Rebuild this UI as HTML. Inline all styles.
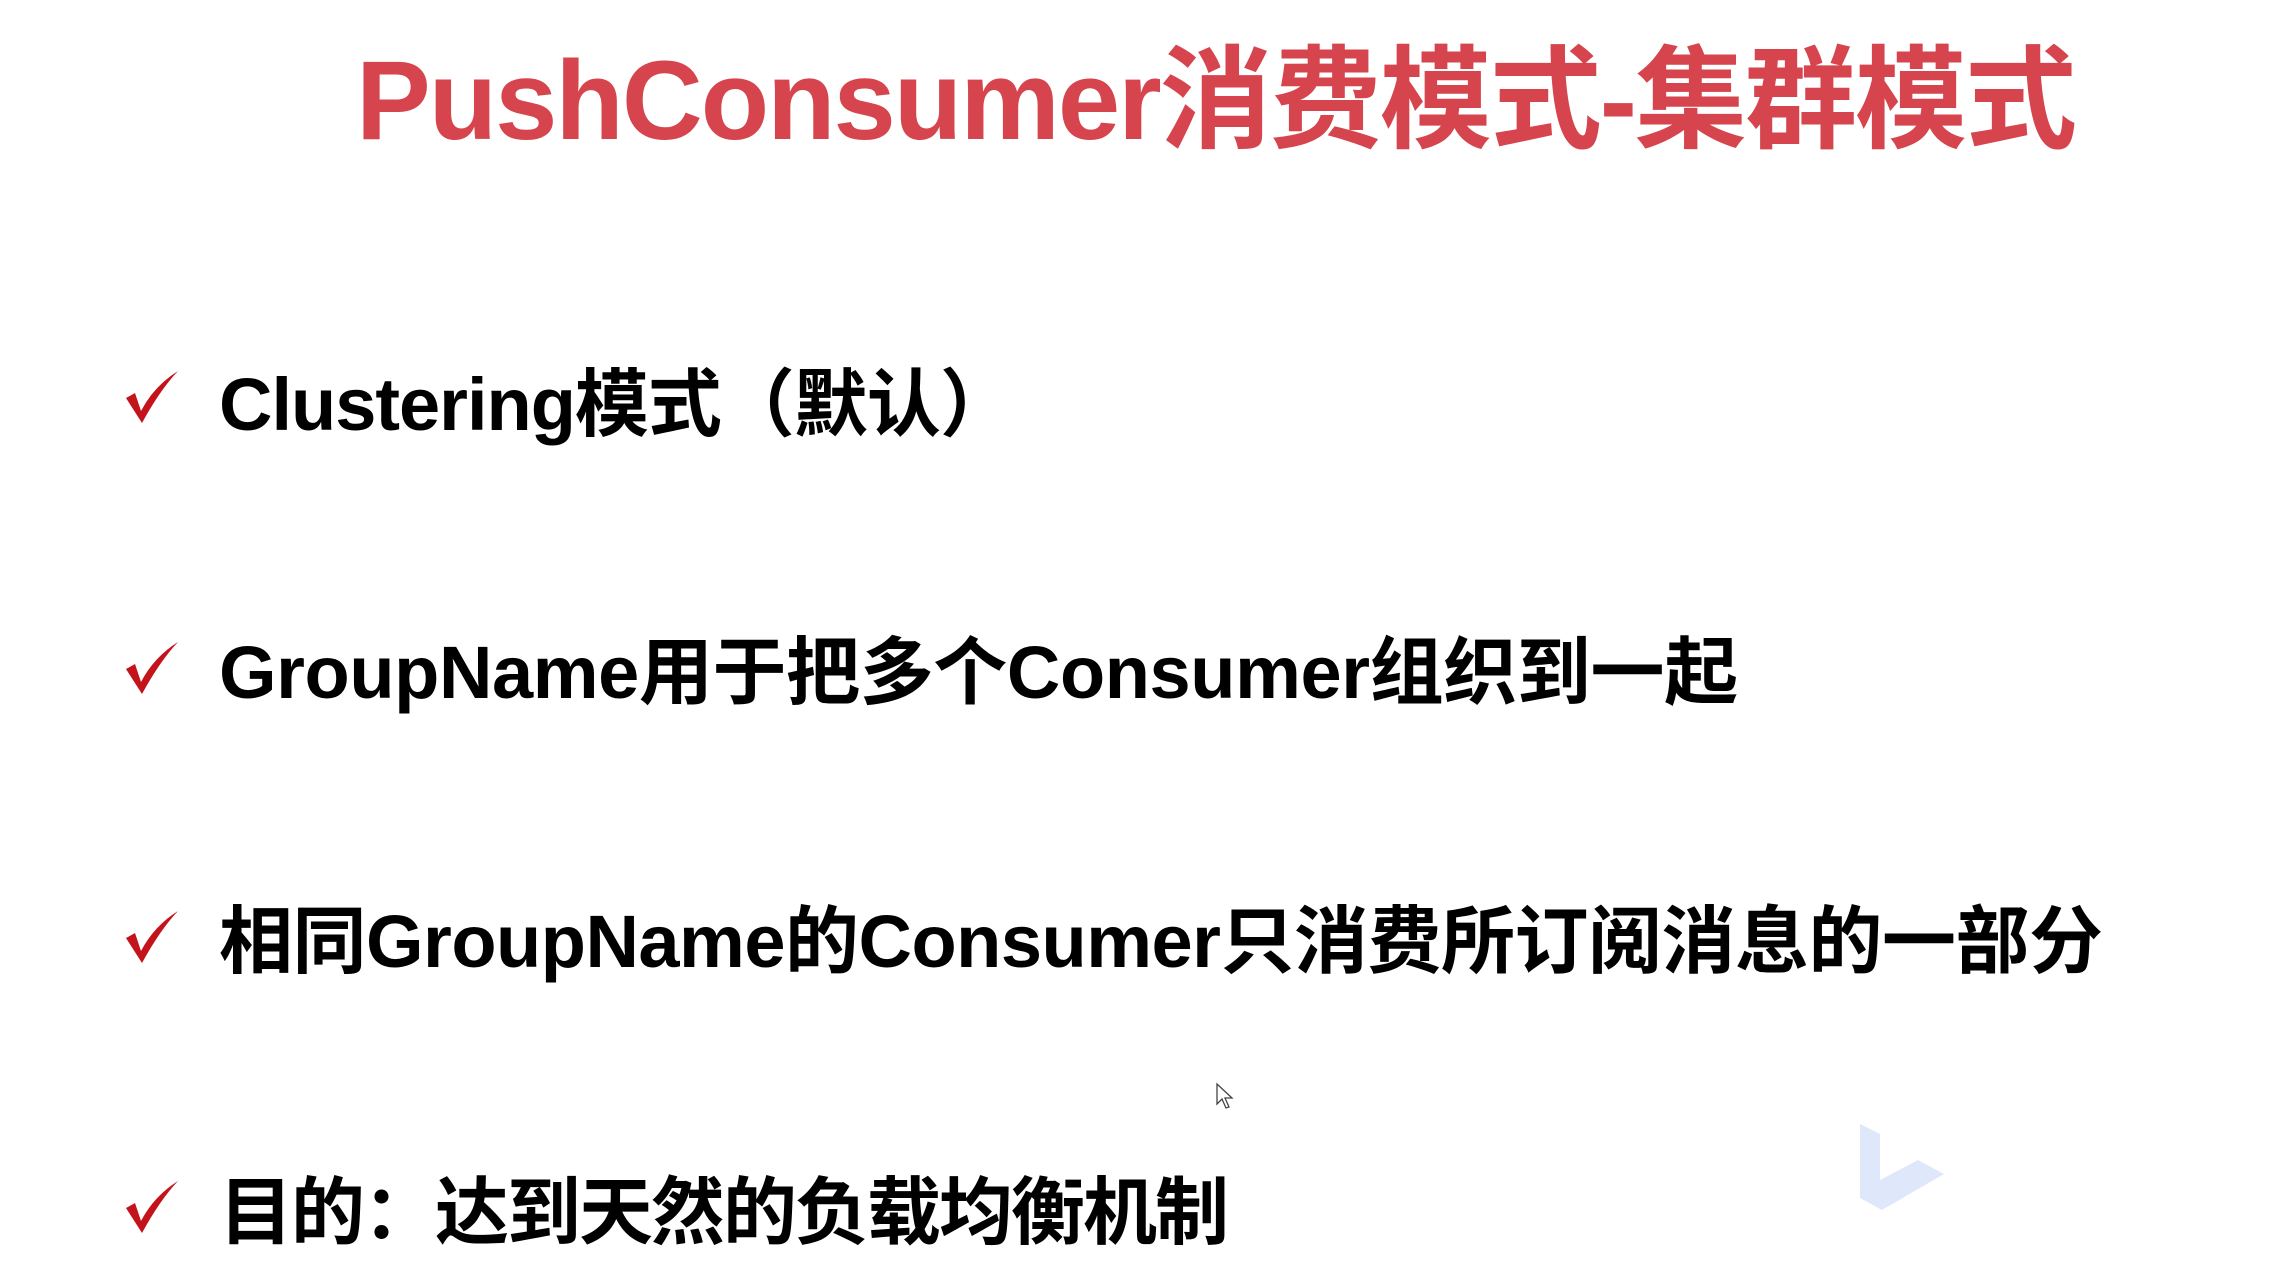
<!DOCTYPE html>
<html><head><meta charset="utf-8"><style>
html,body{margin:0;padding:0;background:#fff;width:2281px;height:1270px;overflow:hidden;position:relative}
.t{position:absolute;left:356px;top:34px;font-family:"Liberation Sans","Noto Sans CJK SC",sans-serif;font-weight:bold;font-size:112px;color:#d6454d;white-space:nowrap;line-height:1.2;letter-spacing:-2px}
.l{position:absolute;left:219px;font-family:"Liberation Sans","Noto Sans CJK SC",sans-serif;font-weight:bold;font-size:74px;color:#000;white-space:nowrap;line-height:1;letter-spacing:-1px}
.c{position:absolute;left:124px;width:56px;height:56px}
</style></head><body>
<div class="t">PushConsumer消费模式-集群模式</div>
<svg class="c" style="top:370px" viewBox="0 0 56 56"><path d="M2 28 L11 23 L17 41 Q30 16 54 1 Q36 20 18 53 Z" fill="#c3141b"/></svg>
<div class="l" style="top:368px">Clustering模式（默认）</div>
<svg class="c" style="top:641px" viewBox="0 0 56 56"><path d="M2 28 L11 23 L17 41 Q30 16 54 1 Q36 20 18 53 Z" fill="#c3141b"/></svg>
<div class="l" style="top:636px;letter-spacing:-0.4px">GroupName用于把多个Consumer组织到一起</div>
<svg class="c" style="top:910px" viewBox="0 0 56 56"><path d="M2 28 L11 23 L17 41 Q30 16 54 1 Q36 20 18 53 Z" fill="#c3141b"/></svg>
<div class="l" style="top:905px;letter-spacing:-0.5px">相同GroupName的Consumer只消费所订阅消息的一部分</div>
<svg class="c" style="top:1180px" viewBox="0 0 56 56"><path d="M2 28 L11 23 L17 41 Q30 16 54 1 Q36 20 18 53 Z" fill="#c3141b"/></svg>
<div class="l" style="top:1176px;letter-spacing:-2px">目的：达到天然的负载均衡机制</div>
<svg style="position:absolute;left:1858px;top:1120px" width="90" height="92" viewBox="0 0 90 92"><path d="M2 4 L22 14 L22 60 L60 40 L86 54 L24 90 L2 78Z" fill="#dfe8fb"/></svg>
<svg style="position:absolute;left:1215px;top:1082px" width="20" height="28" viewBox="0 0 20 28"><path d="M2 2 L2 22 L7 17 L11 26 L14 25 L10 16 L17 16Z" fill="#fff" stroke="#444" stroke-width="1.3"/></svg>
</body></html>
